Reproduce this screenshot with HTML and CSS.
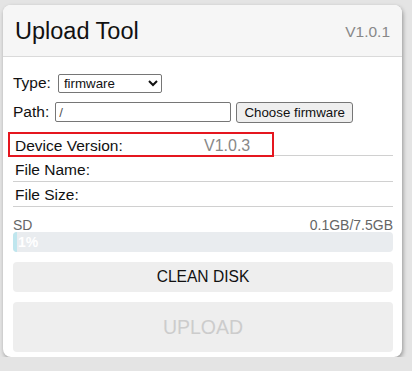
FILE: index.html
```html
<!DOCTYPE html>
<html lang="en">
<head>
    <meta charset="UTF-8">
    <meta name="viewport" content="width=device-width, initial-scale=1.0">
    <title>Upload Tool</title>
    <link rel="stylesheet" href="styles.css">
</head>
<body>
    <div class="card">
        <div class="card-header">
            <h1 class="titulo">Upload Tool</h1>
            <span class="version">V1.0.1</span>
        </div>
        <div class="card-body">
            <div class="campo">
                <label for="tipo" class="label-tipo">Type:</label>
                <select id="tipo" class="selector">
                    <option>firmware</option>
                    <option>file</option>
                </select>
            </div>
            <div class="campo">
                <label for="ruta" class="label-ruta">Path:</label>
                <input type="text" id="ruta" class="ruta" value="/">
                <button class="boton-elegir">Choose firmware</button>
            </div>
            <div class="info info-primera">
                <span class="info-label">Device Version:</span>
                <span class="info-valor">V1.0.3</span>
                <div class="marca"></div>
            </div>
            <div class="info info-segunda">
                <span class="info-label">File Name:</span>
            </div>
            <div class="info">
                <span class="info-label">File Size:</span>
            </div>
            <div class="disco">
                <span>SD</span>
                <span>0.1GB/7.5GB</span>
            </div>
            <div class="progreso">
                <div class="progreso-barra" style="width: 1%"></div>
                <span class="progreso-texto">1%</span>
            </div>
            <button class="boton boton-limpiar">CLEAN DISK</button>
            <button class="boton boton-subir" disabled>UPLOAD</button>
        </div>
    </div>
</body>
</html>
```

FILE: styles.css
```css
body {
    font-family: "Liberation Sans", Arial, sans-serif;
    margin: 0;
    padding: 5px 0 0 3px;
    background-color: #e4e4e4;
    color: #111;
}
.card {
    width: 399px;
    height: 352px;
    background: white;
    border-radius: 8px;
    box-shadow: 1px 2px 4px rgba(0, 0, 0, 0.35);
    overflow: hidden;
    box-sizing: border-box;
}
.card-header {
    height: 52px;
    background: #f6f6f6;
    border-bottom: 1px solid #dadada;
    display: flex;
    align-items: center;
    justify-content: space-between;
    padding: 0 12px 0 12px;
    box-sizing: border-box;
}
.titulo {
    margin: 0;
    font-size: 23.5px;
    font-weight: normal;
    padding-top: 2px;
}
.version {
    font-size: 15.5px;
    color: #888;
    padding-top: 2px;
}
.card-body {
    padding: 16px 9px 0 10px;
    font-size: 15.5px;
}
.campo {
    display: flex;
    align-items: center;
    height: 20px;
    margin-bottom: 9px;
}
.label-tipo {
    margin-right: 7px;
}
.label-ruta {
    margin-right: 6px;
}
.selector {
    font-family: "Liberation Sans", Arial, sans-serif;
    font-size: 13.3px;
    width: 104px;
    height: 19px;
    padding: 0 0 0 1px;
    border: 1px solid #767676;
    border-radius: 2px;
    background: white;
    color: #111;
}
.ruta {
    font-family: "Liberation Sans", Arial, sans-serif;
    font-size: 13.3px;
    width: 176px;
    height: 20px;
    box-sizing: border-box;
    border: 1px solid #767676;
    border-radius: 2px;
    padding: 0 3px;
    color: #555;
    margin-right: 5px;
}
.boton-elegir {
    font-family: "Liberation Sans", Arial, sans-serif;
    font-size: 13.3px;
    height: 21px;
    width: 117px;
    padding: 0;
    border: 1px solid #767676;
    border-radius: 3px;
    background: #efefef;
    color: #111;
}
.info {
    position: relative;
    height: 25px;
    border-bottom: 1px solid #d0d0d0;
    display: flex;
    align-items: center;
    padding: 2px 0 0 2px;
    box-sizing: border-box;
}
.info-primera {
    margin-top: 6px;
    padding-top: 6px;
}
.info-segunda {
    height: 26px;
}
.info-label {
    width: 189px;
}
.info-valor {
    color: #888;
    font-size: 16px;
}
.marca {
    position: absolute;
    left: -5px;
    top: 1px;
    width: 266px;
    height: 25px;
    border: 2px solid #e5161f;
    box-sizing: border-box;
}
.disco {
    display: flex;
    justify-content: space-between;
    font-size: 14px;
    color: #666;
    margin-top: 10px;
    height: 13px;
}
.progreso {
    position: relative;
    height: 20px;
    background: #e9ecef;
    border-radius: 4px;
    overflow: hidden;
    margin-top: 2px;
}
.progreso-barra {
    height: 100%;
    background: #bfe6ee;
}
.progreso-texto {
    position: absolute;
    left: 5px;
    top: 2px;
    font-size: 14px;
    font-weight: bold;
    color: white;
}
.boton {
    display: block;
    width: 100%;
    border: none;
    border-radius: 4px;
    background: #eeeeee;
    font-family: "Liberation Sans", Arial, sans-serif;
    margin-top: 10px;
    padding: 0;
}
.boton-limpiar {
    height: 30px;
    font-size: 15.6px;
    color: #111;
}
.boton-subir {
    height: 50px;
    font-size: 19.5px;
    color: #cccccc;
}
```
